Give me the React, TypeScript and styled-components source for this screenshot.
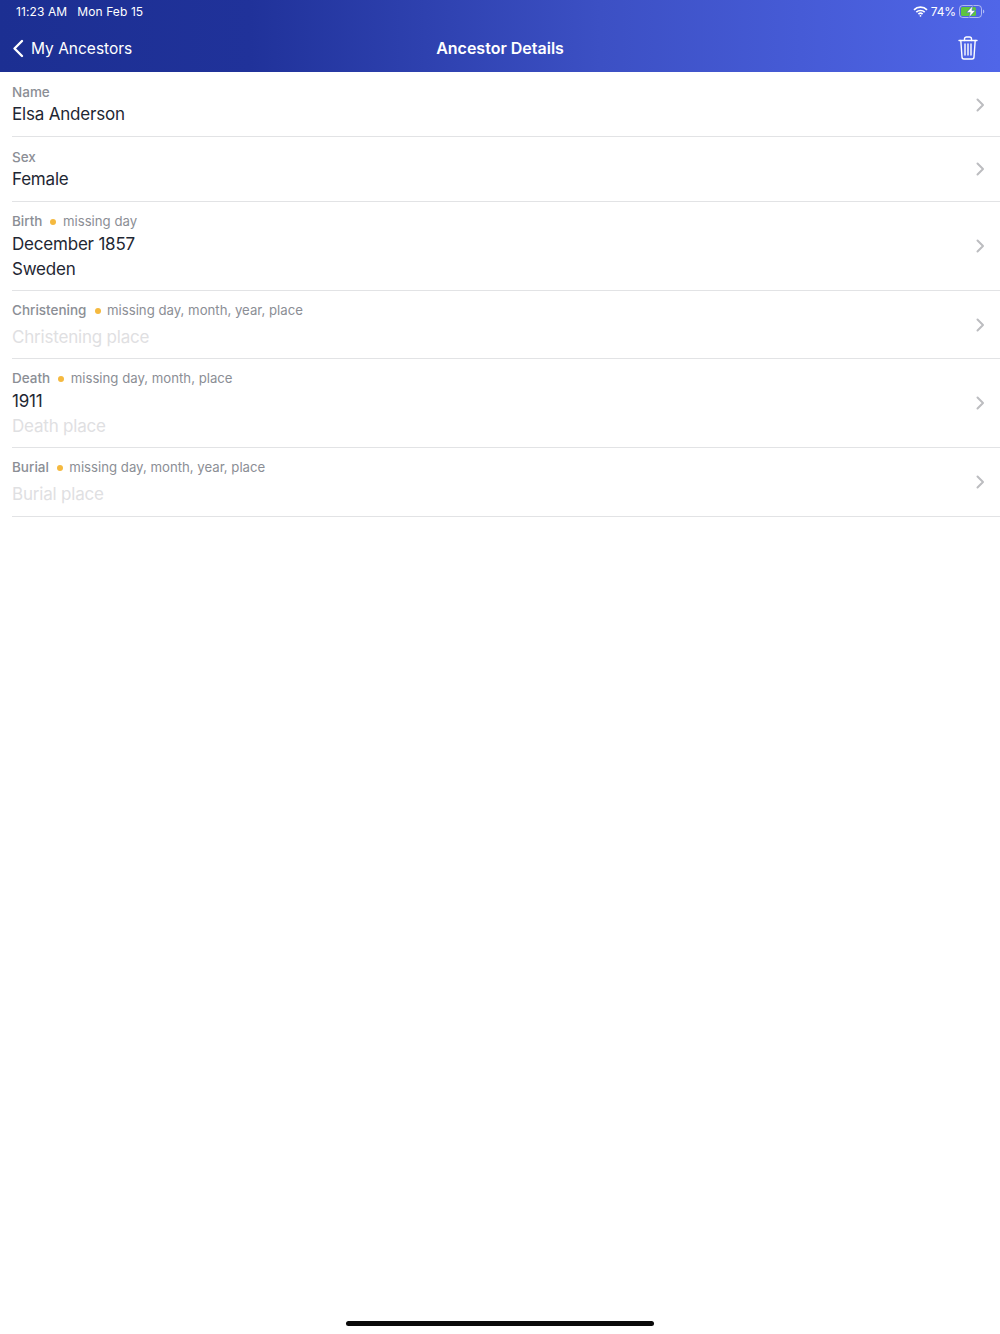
import React from "react";
import styled, { createGlobalStyle } from "styled-components";

const Global = createGlobalStyle`
  html, body { margin: 0; padding: 0; background: #fff; }
  body { font-family: Inter, "Liberation Sans", sans-serif; }
`;

const Page = styled.div`
  width: 1000px;
  height: 1334px;
  display: flex;
  flex-direction: column;
  overflow: hidden;
  background: #fff;
`;

const Header = styled.header`
  height: 72px;
  flex: none;
  box-sizing: border-box;
  display: flex;
  flex-direction: column;
  background: linear-gradient(90deg, #1c2f92 0%, #20329a 25%, #3c50c4 60%, #5066e8 100%);
  color: #fff;
`;

const StatusBar = styled.div`
  height: 23px;
  margin-bottom: 1px;
  display: flex;
  align-items: center;
  justify-content: space-between;
  padding: 0 15px 0 16px;
  font-size: 12px;
  letter-spacing: 0.1px;
`;

const StatusGroup = styled.div<{ $gap: number }>`
  display: flex;
  align-items: center;
  gap: ${(p) => p.$gap}px;
`;

const Percent = styled.span`
  letter-spacing: -0.1px;
`;

const NavBar = styled.div`
  flex: 1;
  display: grid;
  grid-template-columns: 1fr auto 1fr;
  align-items: center;
  padding: 0 22px;
`;

const Back = styled.div`
  display: flex;
  align-items: center;
  gap: 7px;
  margin-left: -10px;
  font-size: 15.5px;
`;

const Title = styled.div`
  font-size: 16px;
  font-weight: 600;
`;

const Trash = styled.div`
  justify-self: end;
  display: flex;
  margin-top: -1px;
`;

const Row = styled.div<{ $height: number }>`
  height: ${(p) => p.$height}px;
  margin-left: 12px;
  box-sizing: border-box;
  border-bottom: 1px solid #e2e3e5;
  padding: 11px 15px 0 0;
  display: flex;
  align-items: center;
  justify-content: space-between;
`;

const RowBody = styled.div`
  align-self: flex-start;
  display: flex;
  flex-direction: column;
`;

const LabelLine = styled.div`
  display: flex;
  align-items: center;
  height: 17px;
  margin-bottom: 2px;
  font-size: 13.5px;
  color: #8b8e95;
`;

const Label = styled.span`
  font-weight: 500;
`;

const Missing = styled.span`
  font-size: 13.2px;
`;

const Dot = styled.span`
  width: 6px;
  height: 6px;
  border-radius: 50%;
  background: #f5b93f;
  margin: 1px 6.5px 0 8px;
`;

const Value = styled.div<{ $placeholder?: boolean; $tall?: boolean }>`
  font-size: 17px;
  letter-spacing: -0.2px;
  line-height: 25px;
  margin-top: ${(p) => (p.$tall ? 4 : 0)}px;
  color: ${(p) => (p.$placeholder ? "#dfe0e2" : "#1f2733")};
`;

const Chevron = styled.svg`
  flex: none;
  margin-top: -10px;
`;

const HomeBar = styled.div`
  width: 308px;
  height: 5px;
  border-radius: 3px;
  background: #0a0a0a;
  margin: auto auto 8px;
`;

type Item = {
  label: string;
  missing?: string;
  height: number;
  values: { text: string; placeholder?: boolean }[];
  tall?: boolean;
};

const items: Item[] = [
  { label: "Name", height: 65, values: [{ text: "Elsa Anderson" }] },
  { label: "Sex", height: 64.5, values: [{ text: "Female" }] },
  { label: "Birth", missing: "missing day", height: 89, values: [{ text: "December 1857" }, { text: "Sweden" }] },
  { label: "Christening", missing: "missing day, month, year, place", height: 68, tall: true, values: [{ text: "Christening place", placeholder: true }] },
  { label: "Death", missing: "missing day, month, place", height: 89, values: [{ text: "1911" }, { text: "Death place", placeholder: true }] },
  { label: "Burial", missing: "missing day, month, year, place", height: 69, tall: true, values: [{ text: "Burial place", placeholder: true }] },
];

export default function App() {
  return (
    <Page>
      <Global />
      <Header>
        <StatusBar>
          <StatusGroup $gap={10}>
            <span>11:23 AM</span>
            <span>Mon Feb 15</span>
          </StatusGroup>
          <StatusGroup $gap={3}>
            <svg width="15" height="11" viewBox="0 0 15 11" fill="none" stroke="#fff" strokeWidth="1.7">
              <path d="M1 3.9a9.2 9.2 0 0 1 13 0" />
              <path d="M3.3 6.2a6 6 0 0 1 8.4 0" />
              <path d="M5.4 8.2a3 3 0 0 1 4.2 0" />
              <circle cx="7.5" cy="9.8" r="0.9" fill="#fff" stroke="none" />
            </svg>
            <Percent>74%</Percent>
            <svg width="26" height="13" viewBox="0 0 26 13" fill="none">
              <rect x="0.5" y="0.5" width="22" height="12" rx="3.2" stroke="#fff" strokeOpacity="0.55" />
              <rect x="2" y="2" width="15" height="9" rx="1.5" fill="#5ec43e" />
              <path d="M24 4.5v4a2 2 0 0 0 1.3-2 2 2 0 0 0-1.3-2z" fill="#fff" fillOpacity="0.55" />
              <path d="M14 0.4 7.6 7.4h3.6L10 12.6l6.4-7.2h-3.5z" fill="#fff" stroke="#3f54c8" strokeWidth="0.5" />
            </svg>
          </StatusGroup>
        </StatusBar>
        <NavBar>
          <Back>
            <svg width="12" height="19" viewBox="0 0 12 19" fill="none" stroke="#fff" strokeWidth="2.4" strokeLinecap="round" strokeLinejoin="round">
              <path d="M10 2 2.5 9.5 10 17" />
            </svg>
            <span>My Ancestors</span>
          </Back>
          <Title>Ancestor Details</Title>
          <Trash>
            <svg width="20" height="24" viewBox="0 0 20 24" fill="none" stroke="#fff" strokeWidth="1.4" strokeLinecap="round" strokeLinejoin="round">
              <path d="M1 4.5h18" />
              <path d="M6.5 4.5V3a2 2 0 0 1 2-2h3a2 2 0 0 1 2 2v1.5" />
              <path d="M2.8 4.5 4 21a2 2 0 0 0 2 2h8a2 2 0 0 0 2-2l1.2-16.5" />
              <path d="M7 8v11M10 8v11M13 8v11" />
            </svg>
          </Trash>
        </NavBar>
      </Header>
      {items.map((item) => (
        <Row key={item.label} $height={item.height}>
          <RowBody>
            <LabelLine>
              <Label>{item.label}</Label>
              {item.missing && (
                <>
                  <Dot />
                  <Missing>{item.missing}</Missing>
                </>
              )}
            </LabelLine>
            {item.values.map((v) => (
              <Value key={v.text} $placeholder={v.placeholder} $tall={item.tall}>
                {v.text}
              </Value>
            ))}
          </RowBody>
          <Chevron width="9" height="14" viewBox="0 0 9 14" fill="none" stroke="#bcbdc0" strokeWidth="2" strokeLinecap="round" strokeLinejoin="round">
            <path d="M1.5 1.5 7 7l-5.5 5.5" />
          </Chevron>
        </Row>
      ))}
      <HomeBar />
    </Page>
  );
}
